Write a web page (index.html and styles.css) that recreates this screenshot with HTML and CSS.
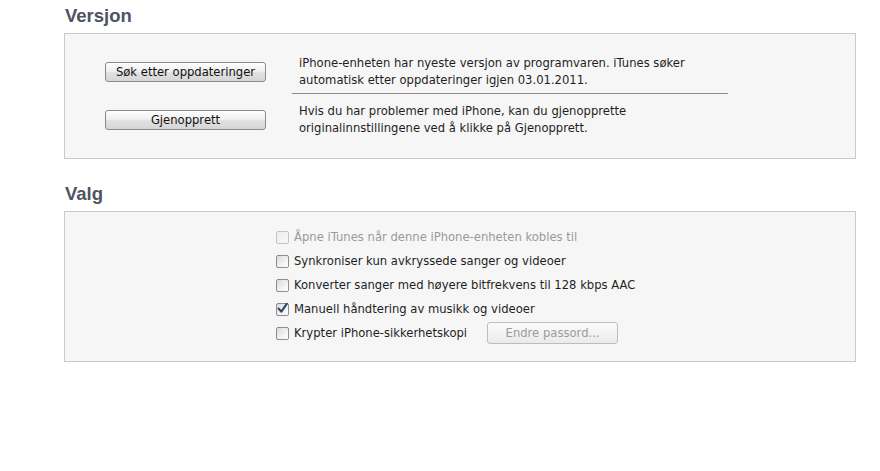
FILE: index.html
```html
<!DOCTYPE html>
<html lang="no">
<head>
<meta charset="utf-8">
<title>iPhone – Versjon og valg</title>
<link rel="stylesheet" href="styles.css">
</head>
<body>
<main class="page">
  <section class="section section-version">
    <h2 class="heading">Versjon</h2>
    <div class="panel version-grid">
      <button class="btn">Søk etter oppdateringer</button>
      <p class="info">iPhone-enheten har nyeste versjon av programvaren. iTunes søker automatisk etter oppdateringer igjen 03.01.2011.</p>
      <div class="separator"></div>
      <button class="btn">Gjenopprett</button>
      <p class="info">Hvis du har problemer med iPhone, kan du gjenopprette originalinnstillingene ved å klikke på Gjenopprett.</p>
    </div>
  </section>

  <section class="section section-options">
    <h2 class="heading">Valg</h2>
    <div class="panel options">
      <label class="option disabled"><span class="cb"></span><span>Åpne iTunes når denne iPhone-enheten kobles til</span></label>
      <label class="option"><span class="cb"></span><span>Synkroniser kun avkryssede sanger og videoer</span></label>
      <label class="option"><span class="cb"></span><span>Konverter sanger med høyere bitfrekvens til 128 kbps AAC</span></label>
      <label class="option"><span class="cb checked"><svg width="11" height="11" viewBox="0 0 11 11"><path d="M1.5 5.5 L4.3 8.6 L9.8 0.8" fill="none" stroke="#2c4566" stroke-width="2.1" stroke-linejoin="round" stroke-linecap="round"/></svg></span><span>Manuell håndtering av musikk og videoer</span></label>
      <label class="option"><span class="cb"></span><span>Krypter iPhone-sikkerhetskopi</span><button class="btn btn-disabled">Endre passord...</button></label>
    </div>
  </section>
</main>
</body>
</html>
```

FILE: styles.css
```css
* { box-sizing: border-box; }

html, body {
  margin: 0;
  padding: 0;
  background: #ffffff;
}

body {
  font-family: "DejaVu Sans", Tahoma, sans-serif;
  font-size: 11.6px;
  color: #1e1e1e;
}

.page {
  padding-left: 64px;
  width: 856px;
}

.heading {
  margin: 0 0 6px 1px;
  font-family: "Liberation Sans", Arial, sans-serif;
  font-weight: bold;
  font-size: 18.5px;
  line-height: 22px;
  color: #4d5462;
}

.section-version .heading { margin-top: 5px; }
.section-options .heading { margin-top: 24px; }

.panel {
  border: 1px solid #c9c9c9;
  background: #f6f6f6;
}

.version-grid {
  display: grid;
  grid-template-columns: 161px 436px;
  column-gap: 26px;
  align-items: center;
  padding: 21px 0 21px 40px;
}

.info {
  margin: 0;
  padding: 0 7px;
  line-height: 17px;
  height: 34px;
}

.separator {
  grid-column: 2;
  height: 1px;
  background: #8c8c8c;
  margin: 4px 0 9px;
}

.btn {
  font-family: "DejaVu Sans", Tahoma, sans-serif;
  font-size: 11.6px;
  color: #111;
  height: 20px;
  padding: 0 6px;
  border: 1px solid #8a8a8a;
  border-radius: 3px;
  background: linear-gradient(#fdfdfd 0%, #f0f0f0 45%, #e0e0e0 55%, #d6d6d6 100%);
  box-shadow: inset 0 1px 0 #ffffff;
  width: 161px;
  line-height: 18px;
}

.options {
  padding: 13px 0 16px 211px;
}

.option {
  display: flex;
  align-items: center;
  height: 24px;
  gap: 5px;
  line-height: 17px;
}

.option.disabled { color: #9a9a9a; }

.cb {
  width: 13px;
  height: 13px;
  flex: none;
  border: 1px solid #8e8e8e;
  border-radius: 2px;
  background: linear-gradient(135deg, #dcdcdc 0%, #f2f2f2 60%, #ffffff 100%);
  display: flex;
  align-items: center;
  justify-content: center;
}

.option.disabled .cb {
  border-color: #c4c4c4;
  background: linear-gradient(135deg, #ececec 0%, #f8f8f8 100%);
}

.cb svg { display: block; margin-top: -1px; }

.btn-disabled {
  width: 131px;
  height: 22px;
  margin-left: 15px;
  color: #9b9b9b;
  border-color: #bdbdbd;
  background: linear-gradient(#fbfbfb 0%, #f3f3f3 50%, #eaeaea 100%);
  box-shadow: none;
}
```
